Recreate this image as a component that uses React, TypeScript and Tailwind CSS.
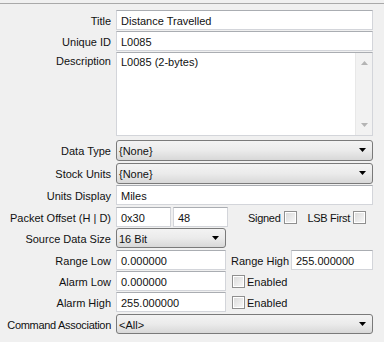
import React from "react";

const Label = ({ children, pt = "pt-[4px]", cls = "" }: { children: React.ReactNode; pt?: string; cls?: string }) => (
  <div className={`w-[116px] shrink-0 pr-[5px] text-right leading-[14px] whitespace-nowrap ${pt} ${cls}`}>{children}</div>
);

const TextBox = ({ value, w = "w-[257px]" }: { value: string; w?: string }) => (
  <div
    className={`${w} h-[20px] shrink-0 border border-[#d3d5da] border-t-[#aaadb2] bg-white pl-[4px] pt-[3px] leading-[14px] whitespace-nowrap overflow-hidden`}
  >
    {value}
  </div>
);

const Arrow = () => (
  <svg width="8" height="5" viewBox="0 0 8 5" className="shrink-0">
    <path d="M0 0 H7 L3.5 4 Z" fill="#000" />
  </svg>
);

const Select = ({ value, w = "w-[257px]", h = "h-[21px]" }: { value: string; w?: string; h?: string }) => (
  <div
    className={`${w} ${h} shrink-0 flex items-center justify-between rounded-[3px] border border-[#7a7a7a] bg-gradient-to-b from-[#f3f3f3] via-[#ebebeb] to-[#d8d8d8] pl-[2px] pr-[5px]`}
  >
    <span className="leading-[14px] pt-[1px]">{value}</span>
    <Arrow />
  </div>
);

const Check = () => (
  <div className="w-[13px] h-[13px] shrink-0 border border-[#8f8f8f] bg-white p-px">
    <div className="w-full h-full bg-gradient-to-br from-[#dcdcdc] to-[#f6f6f6]" />
  </div>
);

export default function App() {
  return (
    <div
      className="w-[384px] h-[342px] bg-[#f0f0f0] text-[11px] text-[#111] overflow-hidden"
      style={{ fontFamily: '"Liberation Sans", Arial, sans-serif' }}
    >
      <div className="h-[3px]" />
      <div className="h-px bg-[#a9a9a9]" />
      <div className="flex flex-col pt-[6px]">
        <div className="flex h-[20px]">
          <Label>Title</Label>
          <TextBox value="Distance Travelled" />
        </div>
        <div className="flex h-[20px] mt-[1px]">
          <Label>Unique ID</Label>
          <TextBox value="L0085" />
        </div>
        <div className="flex h-[84px] mt-[1px]">
          <Label pt="pt-[2px]">Description</Label>
          <div className="w-[257px] h-[84px] flex border border-[#d3d5da] border-t-[#aaadb2] bg-white">
            <div className="flex-1 pl-[4px] pt-[2px] leading-[14px]">L0085 (2-bytes)</div>
            <div className="w-[17px] h-full bg-[#f2f2f2] border-l border-[#e8e8e8] flex flex-col items-center justify-between py-[8px]">
              <svg width="7" height="4" viewBox="0 0 7 4">
                <path d="M0 4 L3.5 0 L7 4 Z" fill="#b4b4b4" />
              </svg>
              <svg width="7" height="4" viewBox="0 0 7 4">
                <path d="M0 0 H7 L3.5 4 Z" fill="#b4b4b4" />
              </svg>
            </div>
          </div>
        </div>
        <div className="flex h-[21px] mt-[4px]">
          <Label>Data Type</Label>
          <Select value="{None}" />
        </div>
        <div className="flex h-[21px] mt-[2px]">
          <Label>Stock Units</Label>
          <Select value="{None}" />
        </div>
        <div className="flex h-[20px] mt-[1px]">
          <Label>Units Display</Label>
          <TextBox value="Miles" />
        </div>
        <div className="flex h-[20px] mt-[2px]">
          <Label>Packet Offset (H | D)</Label>
          <TextBox value="0x30" w="w-[55px]" />
          <div className="w-[2px]" />
          <TextBox value="48" w="w-[55px]" />
          <div className="flex items-center ml-[20px] tracking-[-0.3px]">
            <span className="leading-[14px] pt-[1px]">Signed</span>
            <div className="ml-[4px]"><Check /></div>
            <span className="ml-[10px] leading-[14px] pt-[1px]">LSB First</span>
            <div className="ml-[3px]"><Check /></div>
          </div>
        </div>
        <div className="flex h-[20px] mt-[1px]">
          <Label>Source Data Size</Label>
          <Select value="16 Bit" w="w-[110px]" h="h-[20px]" />
        </div>
        <div className="flex h-[20px] mt-[2px]">
          <Label>Range Low</Label>
          <TextBox value="0.000000" w="w-[110px]" />
          <span className="ml-[5px] pt-[4px] leading-[14px]">Range High</span>
          <div className="ml-auto">
            <TextBox value="255.000000" w="w-[82px]" />
          </div>
          <div className="w-[11px]" />
        </div>
        <div className="flex h-[20px] mt-[1px]">
          <Label>Alarm Low</Label>
          <TextBox value="0.000000" w="w-[110px]" />
          <div className="flex items-center ml-[6px]">
            <Check />
            <span className="ml-[2px] leading-[14px] pt-[1px]">Enabled</span>
          </div>
        </div>
        <div className="flex h-[20px] mt-[1px]">
          <Label>Alarm High</Label>
          <TextBox value="255.000000" w="w-[110px]" />
          <div className="flex items-center ml-[6px]">
            <Check />
            <span className="ml-[2px] leading-[14px] pt-[1px]">Enabled</span>
          </div>
        </div>
        <div className="flex h-[20px] mt-[2px]">
          <Label cls="tracking-[-0.3px]">Command Association</Label>
          <Select value="<All>" h="h-[20px]" />
        </div>
      </div>
    </div>
  );
}
